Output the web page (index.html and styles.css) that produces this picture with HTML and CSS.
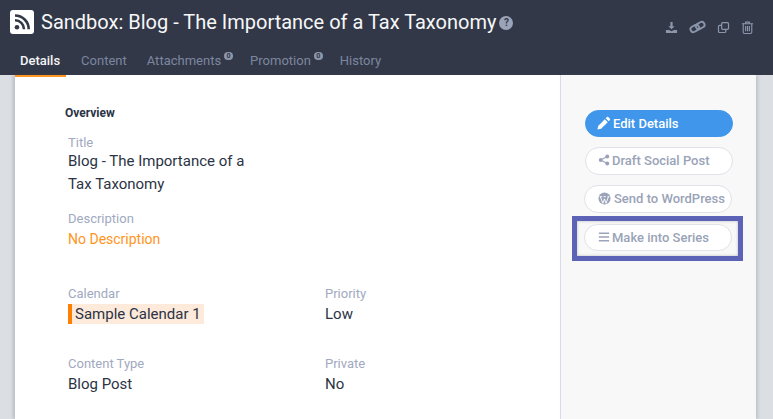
FILE: index.html
```html
<!DOCTYPE html>
<html lang="en">
<head>
<meta charset="utf-8">
<title>Sandbox</title>
<link rel="stylesheet" href="styles.css">
</head>
<body>
<header class="top">
  <div class="title-row">
    <div class="title-left">
      <svg class="rss" viewBox="0 0 24 24"><rect width="24" height="24" rx="3" fill="#fff"/><circle cx="7" cy="17.2" r="2.3" fill="#323848"/><path d="M5 10.2a9 9 0 0 1 9 9" fill="none" stroke="#323848" stroke-width="2.6"/><path d="M5 5.5a13.7 13.7 0 0 1 13.7 13.7" fill="none" stroke="#323848" stroke-width="2.6"/></svg>
      <h1 class="title">Sandbox: Blog - The Importance of a Tax Taxonomy</h1>
      <span class="help">?</span>
    </div>
    <div class="tools">
      <svg class="tool" viewBox="0 0 14 14"><path d="M5.8 1h2.4v4.6h2.2L7 9 3.6 5.6h2.2z" fill="#8c96ab"/><path d="M1 9.6h3.4L7 11l2.6-1.4H13V13H1z" fill="#8c96ab"/></svg>
      <svg class="tool tool-link" viewBox="0 0 18 14"><g fill="none" stroke="#8c96ab" stroke-width="2" transform="rotate(-28 9 7)"><rect x="1" y="4" width="9.5" height="6" rx="3"/><rect x="7.5" y="4" width="9.5" height="6" rx="3"/></g></svg>
      <svg class="tool" viewBox="0 0 14 14"><g fill="none" stroke="#8c96ab" stroke-width="1.3"><rect x="5" y="1.7" width="7.4" height="7.4" rx="1.2"/><path d="M5 4.6H2.8a1.2 1.2 0 0 0-1.2 1.2v5.4a1.2 1.2 0 0 0 1.2 1.2h5.4a1.2 1.2 0 0 0 1.2-1.2V9.1"/></g></svg>
      <svg class="tool" viewBox="0 0 14 14"><g fill="none" stroke="#8c96ab" stroke-width="1.2"><path d="M1 3h12M5 3V1.2h4V3"/><path d="M2.4 3v9.2a1.2 1.2 0 0 0 1.2 1.2h6.8a1.2 1.2 0 0 0 1.2-1.2V3"/><path d="M5 5.5v5.5M7 5.5v5.5M9 5.5v5.5"/></g></svg>
    </div>
  </div>
  <nav class="tabs">
    <a class="tab active">Details</a>
    <a class="tab">Content</a>
    <a class="tab">Attachments<span class="badge">0</span></a>
    <a class="tab">Promotion<span class="badge">0</span></a>
    <a class="tab">History</a>
  </nav>
</header>
<div class="stage">
  <main class="sheet">
    <section class="main">
      <h2 class="overview">Overview</h2>
      <div class="field title-field">
        <div class="label">Title</div>
        <div class="value">Blog - The Importance of a<br>Tax Taxonomy</div>
      </div>
      <div class="field desc-field">
        <div class="label">Description</div>
        <div class="value none">No Description</div>
      </div>
      <div class="grid">
        <div class="field">
          <div class="label">Calendar</div>
          <div class="value"><span class="cal">Sample Calendar 1</span></div>
        </div>
        <div class="field">
          <div class="label">Priority</div>
          <div class="value">Low</div>
        </div>
        <div class="field">
          <div class="label">Content Type</div>
          <div class="value">Blog Post</div>
        </div>
        <div class="field">
          <div class="label">Private</div>
          <div class="value">No</div>
        </div>
      </div>
    </section>
    <aside class="side">
      <button class="btn primary"><svg class="ico ico-pencil" viewBox="0 0 16 16"><path d="M11.4 1.2a1 1 0 0 1 1.4 0l2 2a1 1 0 0 1 0 1.4l-1.5 1.5-3.4-3.4zM8.9 3.7l3.4 3.4-7.6 7.6-4.2.8.8-4.2z" fill="#fff"/></svg>Edit Details</button>
      <button class="btn share"><svg class="ico" viewBox="0 0 14 14"><g fill="#9aa3b8"><circle cx="10.8" cy="3" r="2.3"/><circle cx="10.8" cy="11" r="2.3"/><circle cx="3.2" cy="7" r="2.3"/></g><path d="M10.8 3 3.2 7l7.6 4" fill="none" stroke="#9aa3b8" stroke-width="1.2"/></svg>Draft Social Post</button>
      <button class="btn wp"><svg class="ico" viewBox="0 0 14 14"><circle cx="7" cy="7" r="6.5" fill="#9aa3b8"/><path d="M2.5 5 5.2 12.2 7 7.4 8.6 12.2 11.3 5M1.9 5h2.6M5.9 5h2.4M10.2 5h1.9" fill="none" stroke="#fff" stroke-width="1"/></svg>Send to WordPress</button>
      <div class="callout">
        <button class="btn"><svg class="ico ico-menu" viewBox="0 0 14 14"><path d="M1 2.6h12M1 7h12M1 11.4h12" stroke="#9aa3b8" stroke-width="1.9"/></svg>Make into Series</button>
      </div>
    </aside>
  </main>
</div>
</body>
</html>
```

FILE: styles.css
```css
* { box-sizing: border-box; }
html, body { margin: 0; padding: 0; height: 100%; overflow: hidden; }
body { width: 773px; height: 419px; background: #dbdfe4; font-family: Roboto, "Liberation Sans", sans-serif; color: #2b3344; }

.top { height: 75px; background: #323848; display: flex; flex-direction: column; }
.title-row { height: 45px; display: flex; align-items: flex-start; justify-content: space-between; padding: 7px 19px 0 10px; }
.title-left { display: flex; align-items: center; }
.rss { width: 24px; height: 24px; margin-right: 7px; }
.title { margin: 0; font-size: 20px; font-weight: 400; line-height: 30px; color: #f6f7f8; white-space: nowrap; }
.help { width: 14px; height: 14px; margin: 1px 0 0 3px; border-radius: 50%; background: #9aa3b8; color: #323848; font-size: 10px; font-weight: 700; line-height: 14px; text-align: center; }
.tools { display: flex; align-items: center; gap: 11px; padding-top: 13px; }
.tool { width: 13px; height: 13px; }
.tool-link { width: 17px; height: 14px; }

.tabs { display: flex; height: 30px; padding-left: 15px; }
.tab { padding: 0 5px; margin-right: 10px; font-size: 13px; line-height: 32px; color: #7c879f; white-space: nowrap; height: 32px; position: relative; }
.tab.active { color: #f4f5f7; font-weight: 500; border-bottom: 2px solid #ff9420; padding: 0 6px 0 5px; margin-right: 10px; z-index: 1; }
.badge { display: inline-block; vertical-align: top; width: 9px; height: 8px; margin: 7px -3px 0 3px; border-radius: 4px; background: #8c96ab; color: #323848; font-size: 7px; font-weight: 700; line-height: 8px; text-align: center; }

.stage { height: 344px; padding: 0 17px 0 15px; }
.sheet { height: 344px; display: flex; background: #fff; box-shadow: -2px 0 3px rgba(80, 90, 110, 0.25); }
.main { width: 545px; flex: none; padding: 31px 0 0 50px; }
.side { flex: 1; background: #f8f8f9; border-left: 1px solid #d9dce6; box-shadow: 2px 0 3px rgba(80, 90, 110, 0.2); padding: 35px 0 0 24px; display: flex; flex-direction: column; align-items: flex-start; }

.overview { margin: 0 0 15px; font-size: 12px; font-weight: 700; line-height: 14px; color: #2b3344; }
.field { padding-left: 3px; }
.label { font-size: 13px; line-height: 15px; color: #a1a9bf; }
.value { font-size: 15px; line-height: 23px; color: #2b3344; }
.title-field { margin-bottom: 15px; }
.value.none { font-size: 14px; color: #ff9420; margin-top: 2px; }
.desc-field { margin-bottom: 35px; }
.grid { display: grid; grid-template-columns: 257px 1fr; row-gap: 32px; }
.grid .value { margin-top: 3px; line-height: 20px; }
.cal { display: inline-block; height: 20px; line-height: 20px; padding: 0 3px; background: #fdeadb; border-left: 4px solid #ff7f00; color: #2b3344; vertical-align: top; }

.btn { display: flex; align-items: center; width: 148px; height: 28px; margin: 0 0 10px; padding: 0 0 2px 12px; border: 1px solid #dfe2e8; border-radius: 14px; background: #fff; color: #9aa3b8; font: 500 13px Roboto, "Liberation Sans", sans-serif; white-space: nowrap; }
.btn.primary { height: 27px; padding: 0 0 1px 11px; background: #3f96ea; border-color: #3f96ea; color: #fff; }
.ico { width: 12px; height: 12px; margin-right: 2px; flex: none; }
.ico-pencil { width: 14px; height: 14px; margin-right: 2px; }
.btn.wp { width: 148px; margin-left: -1px; padding-left: 13px; }
.btn.wp .ico { width: 13px; height: 13px; margin-right: 3px; }
.callout { position: absolute; left: 572px; top: 216px; width: 171px; height: 45px; border: 5px solid #5c62b5; padding: 3px 0 0 7px; box-shadow: inset 0 0 3px rgba(0,0,0,.25); }
.callout .btn { margin: 0; width: 148px; height: 27px; padding: 0 0 1px 13px; }
.callout .ico-menu { width: 12px; height: 12px; margin-right: 2px; }
```
